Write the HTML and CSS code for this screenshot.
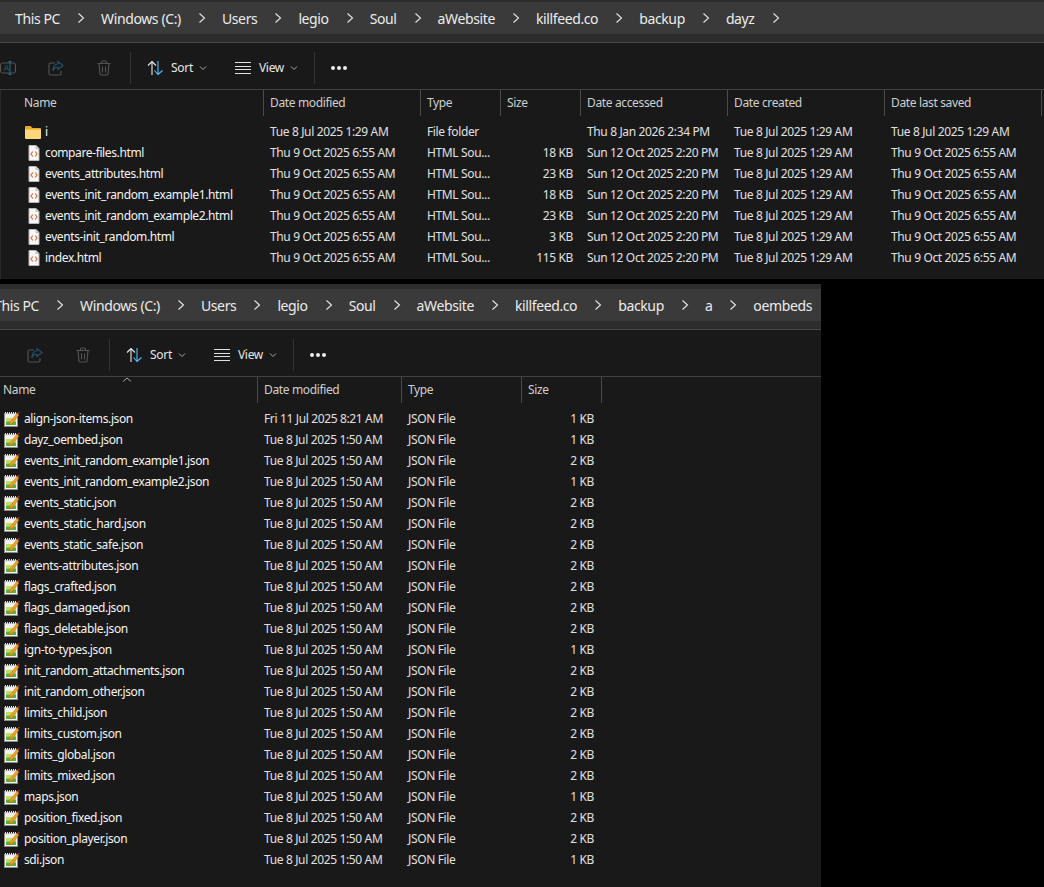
FILE: index.html
```html
<!DOCTYPE html>
<html lang="en">
<head>
<meta charset="utf-8">
<title>Explorer windows</title>
<link rel="stylesheet" href="styles.css">
</head>
<body>
<svg class="defs" width="0" height="0" aria-hidden="true">
  <symbol id="chev" viewBox="0 0 8 12"><path d="M1.5 1.5 6.5 6 1.5 10.5" fill="none" stroke="#e6e6e6" stroke-width="1.1"/></symbol>
  <symbol id="mini" viewBox="0 0 8 6"><path d="M1 1.5 4 4.5 7 1.5" fill="none" stroke="#a8a8a8" stroke-width="1"/></symbol>
  <symbol id="rename" viewBox="0 0 16 16"><rect x=".5" y="3" width="15" height="10" rx="2" fill="none" stroke="#555"/><path d="M4 11 6.500 5 9 11M5 9h3" fill="none" stroke="#1f5068"/><path d="M10 1.500v13M8.500 1.500h3M8.500 14.500h3" fill="none" stroke="#2a6a8c"/></symbol>
  <symbol id="share" viewBox="0 0 16 16"><path d="M7 3H2.500A1.500 1.500 0 0 0 1 4.500v9A1.500 1.500 0 0 0 2.500 15h9a1.500 1.500 0 0 0 1.500-1.500V11" fill="none" stroke="#555" stroke-width="1.100"/><path d="M10 1.500 15 5.500 10 9.500V7.300C7.500 7.300 5.800 8.300 4.800 11 4.800 7.500 6.800 4 10 3.800Z" fill="none" stroke="#24526c" stroke-width="1.100"/></symbol>
  <symbol id="trash" viewBox="0 0 16 16"><path d="M1.500 3.500h13M5.500 3.500V2a1 1 0 0 1 1-1h3a1 1 0 0 1 1 1v1.500M3 3.500 4 14a1.500 1.500 0 0 0 1.500 1h5A1.500 1.500 0 0 0 12 14l1-10.500M6.500 6.500v6M9.500 6.500v6" fill="none" stroke="#555" stroke-width="1.100"/></symbol>
  <symbol id="sort" viewBox="0 0 16 16"><path d="M5 15V1.500M1 5.500 5 1.500 9 5.500" fill="none" stroke="#e8e8e8" stroke-width="1.100"/><path d="M11 1v13.500M7.500 10.500 11 14.500 15.500 10.500" fill="none" stroke="#4cc2ff" stroke-width="1.100"/></symbol>
  <symbol id="view" viewBox="0 0 16 16"><path d="M0 2.500h16M0 6.500h16M0 9.500h16M0 13.500h16" fill="none" stroke="#e0e0e0" stroke-width="1"/></symbol>
  <symbol id="folder" viewBox="0 0 16 14"><path d="M0 2a1 1 0 0 1 1-1h4.500L7.500 3H15a1 1 0 0 1 1 1v1H0Z" fill="#e8a825"/><path d="M0 4.500h16V13a1 1 0 0 1-1 1H1a1 1 0 0 1-1-1Z" fill="#fcd87a"/></symbol>
  <symbol id="html" viewBox="0 0 12 16"><path d="M1 .500h7l3 3V15.500H1Z" fill="#f7f7f7" stroke="#b8b8b8"/><path d="M8 .500V3.500h3" fill="#ddd" stroke="#b8b8b8"/><path d="M4.800 6.500 3 9 4.800 11.500M7.200 6.500 9 9 7.200 11.500" fill="none" stroke="#d8703a" stroke-width="1.200"/></symbol>
  <symbol id="json" viewBox="0 0 16 16"><rect x=".5" y="2.500" width="13" height="13" fill="#f4f4f4" stroke="#8b8b8b"/><path d="M1.500 1v3M3.500 1v3M5.500 1v3M7.500 1v3M9.500 1v3M11.500 1v3" stroke="#e2e2e2"/><rect x="2" y="5" width="10" height="9" fill="#f2f2f2"/><rect x="2" y="7" width="10" height="3.500" fill="#c2dc62"/><rect x="2" y="10.500" width="10" height="3.500" fill="#5fae38"/><path d="M5 14 6 11 13 2.500 15 4 8 12.500Z" fill="#f4a21d" stroke="#a8660e" stroke-width=".5"/><path d="M13.500 1.500 15.500 .500 15.500 3Z" fill="#c0272d"/></symbol>
</svg>

<div class="stack">
<section class="win win-a">
  <nav class="crumbs">
    <span>This PC</span><svg class="chev"><use href="#chev"/></svg>
    <span>Windows (C:)</span><svg class="chev"><use href="#chev"/></svg>
    <span>Users</span><svg class="chev"><use href="#chev"/></svg>
    <span>legio</span><svg class="chev"><use href="#chev"/></svg>
    <span>Soul</span><svg class="chev"><use href="#chev"/></svg>
    <span>aWebsite</span><svg class="chev"><use href="#chev"/></svg>
    <span>killfeed.co</span><svg class="chev"><use href="#chev"/></svg>
    <span>backup</span><svg class="chev"><use href="#chev"/></svg>
    <span>dayz</span><svg class="chev"><use href="#chev"/></svg>
  </nav>
  <div class="toolbar">
    <svg class="tool"><use href="#rename"/></svg>
    <svg class="tool"><use href="#share"/></svg>
    <svg class="tool"><use href="#trash"/></svg>
    <i class="sep"></i>
    <div class="btn"><svg class="ic"><use href="#sort"/></svg><span>Sort</span><svg class="mini"><use href="#mini"/></svg></div>
    <div class="btn"><svg class="ic"><use href="#view"/></svg><span>View</span><svg class="mini"><use href="#mini"/></svg></div>
    <i class="sep"></i>
    <div class="dots"><b></b><b></b><b></b></div>
  </div>
  <div class="list">
    <div class="row head">
      <div>Name</div><div>Date modified</div><div>Type</div><div>Size</div><div>Date accessed</div><div>Date created</div><div>Date last saved</div>
    </div>
    <div class="rows">
      <div class="row"><div class="name"><svg class="fi folder"><use href="#folder"/></svg>i</div><div>Tue 8 Jul 2025 1:29 AM</div><div>File folder</div><div></div><div>Thu 8 Jan 2026 2:34 PM</div><div>Tue 8 Jul 2025 1:29 AM</div><div>Tue 8 Jul 2025 1:29 AM</div></div>
      <div class="row"><div class="name"><svg class="fi htm"><use href="#html"/></svg>compare-files.html</div><div>Thu 9 Oct 2025 6:55 AM</div><div>HTML Sou...</div><div class="num">18 KB</div><div>Sun 12 Oct 2025 2:20 PM</div><div>Tue 8 Jul 2025 1:29 AM</div><div>Thu 9 Oct 2025 6:55 AM</div></div>
      <div class="row"><div class="name"><svg class="fi htm"><use href="#html"/></svg>events_attributes.html</div><div>Thu 9 Oct 2025 6:55 AM</div><div>HTML Sou...</div><div class="num">23 KB</div><div>Sun 12 Oct 2025 2:20 PM</div><div>Tue 8 Jul 2025 1:29 AM</div><div>Thu 9 Oct 2025 6:55 AM</div></div>
      <div class="row"><div class="name"><svg class="fi htm"><use href="#html"/></svg>events_init_random_example1.html</div><div>Thu 9 Oct 2025 6:55 AM</div><div>HTML Sou...</div><div class="num">18 KB</div><div>Sun 12 Oct 2025 2:20 PM</div><div>Tue 8 Jul 2025 1:29 AM</div><div>Thu 9 Oct 2025 6:55 AM</div></div>
      <div class="row"><div class="name"><svg class="fi htm"><use href="#html"/></svg>events_init_random_example2.html</div><div>Thu 9 Oct 2025 6:55 AM</div><div>HTML Sou...</div><div class="num">23 KB</div><div>Sun 12 Oct 2025 2:20 PM</div><div>Tue 8 Jul 2025 1:29 AM</div><div>Thu 9 Oct 2025 6:55 AM</div></div>
      <div class="row"><div class="name"><svg class="fi htm"><use href="#html"/></svg>events-init_random.html</div><div>Thu 9 Oct 2025 6:55 AM</div><div>HTML Sou...</div><div class="num">3 KB</div><div>Sun 12 Oct 2025 2:20 PM</div><div>Tue 8 Jul 2025 1:29 AM</div><div>Thu 9 Oct 2025 6:55 AM</div></div>
      <div class="row"><div class="name"><svg class="fi htm"><use href="#html"/></svg>index.html</div><div>Thu 9 Oct 2025 6:55 AM</div><div>HTML Sou...</div><div class="num">115 KB</div><div>Sun 12 Oct 2025 2:20 PM</div><div>Tue 8 Jul 2025 1:29 AM</div><div>Thu 9 Oct 2025 6:55 AM</div></div>
    </div>
  </div>
</section>

<section class="win win-b">
  <nav class="crumbs">
    <span>This PC</span><svg class="chev"><use href="#chev"/></svg>
    <span>Windows (C:)</span><svg class="chev"><use href="#chev"/></svg>
    <span>Users</span><svg class="chev"><use href="#chev"/></svg>
    <span>legio</span><svg class="chev"><use href="#chev"/></svg>
    <span>Soul</span><svg class="chev"><use href="#chev"/></svg>
    <span>aWebsite</span><svg class="chev"><use href="#chev"/></svg>
    <span>killfeed.co</span><svg class="chev"><use href="#chev"/></svg>
    <span>backup</span><svg class="chev"><use href="#chev"/></svg>
    <span>a</span><svg class="chev"><use href="#chev"/></svg>
    <span>oembeds</span>
  </nav>
  <div class="toolbar">
    <svg class="tool"><use href="#share"/></svg>
    <svg class="tool"><use href="#trash"/></svg>
    <i class="sep"></i>
    <div class="btn"><svg class="ic"><use href="#sort"/></svg><span>Sort</span><svg class="mini"><use href="#mini"/></svg></div>
    <div class="btn"><svg class="ic"><use href="#view"/></svg><span>View</span><svg class="mini"><use href="#mini"/></svg></div>
    <i class="sep"></i>
    <div class="dots"><b></b><b></b><b></b></div>
  </div>
  <div class="list">
    <svg class="caret" width="10" height="5" viewBox="0 0 10 5"><path d="M1 4.500 5 1 9 4.500" fill="none" stroke="#a8a8a8"/></svg>
    <div class="row head">
      <div>Name</div><div>Date modified</div><div>Type</div><div>Size</div>
    </div>
    <div class="rows">
      <div class="row"><div class="name"><svg class="fi"><use href="#json"/></svg>align-json-items.json</div><div>Fri 11 Jul 2025 8:21 AM</div><div>JSON File</div><div class="num">1 KB</div></div>
      <div class="row"><div class="name"><svg class="fi"><use href="#json"/></svg>dayz_oembed.json</div><div>Tue 8 Jul 2025 1:50 AM</div><div>JSON File</div><div class="num">1 KB</div></div>
      <div class="row"><div class="name"><svg class="fi"><use href="#json"/></svg>events_init_random_example1.json</div><div>Tue 8 Jul 2025 1:50 AM</div><div>JSON File</div><div class="num">2 KB</div></div>
      <div class="row"><div class="name"><svg class="fi"><use href="#json"/></svg>events_init_random_example2.json</div><div>Tue 8 Jul 2025 1:50 AM</div><div>JSON File</div><div class="num">1 KB</div></div>
      <div class="row"><div class="name"><svg class="fi"><use href="#json"/></svg>events_static.json</div><div>Tue 8 Jul 2025 1:50 AM</div><div>JSON File</div><div class="num">2 KB</div></div>
      <div class="row"><div class="name"><svg class="fi"><use href="#json"/></svg>events_static_hard.json</div><div>Tue 8 Jul 2025 1:50 AM</div><div>JSON File</div><div class="num">2 KB</div></div>
      <div class="row"><div class="name"><svg class="fi"><use href="#json"/></svg>events_static_safe.json</div><div>Tue 8 Jul 2025 1:50 AM</div><div>JSON File</div><div class="num">2 KB</div></div>
      <div class="row"><div class="name"><svg class="fi"><use href="#json"/></svg>events-attributes.json</div><div>Tue 8 Jul 2025 1:50 AM</div><div>JSON File</div><div class="num">2 KB</div></div>
      <div class="row"><div class="name"><svg class="fi"><use href="#json"/></svg>flags_crafted.json</div><div>Tue 8 Jul 2025 1:50 AM</div><div>JSON File</div><div class="num">2 KB</div></div>
      <div class="row"><div class="name"><svg class="fi"><use href="#json"/></svg>flags_damaged.json</div><div>Tue 8 Jul 2025 1:50 AM</div><div>JSON File</div><div class="num">2 KB</div></div>
      <div class="row"><div class="name"><svg class="fi"><use href="#json"/></svg>flags_deletable.json</div><div>Tue 8 Jul 2025 1:50 AM</div><div>JSON File</div><div class="num">2 KB</div></div>
      <div class="row"><div class="name"><svg class="fi"><use href="#json"/></svg>ign-to-types.json</div><div>Tue 8 Jul 2025 1:50 AM</div><div>JSON File</div><div class="num">1 KB</div></div>
      <div class="row"><div class="name"><svg class="fi"><use href="#json"/></svg>init_random_attachments.json</div><div>Tue 8 Jul 2025 1:50 AM</div><div>JSON File</div><div class="num">2 KB</div></div>
      <div class="row"><div class="name"><svg class="fi"><use href="#json"/></svg>init_random_other.json</div><div>Tue 8 Jul 2025 1:50 AM</div><div>JSON File</div><div class="num">2 KB</div></div>
      <div class="row"><div class="name"><svg class="fi"><use href="#json"/></svg>limits_child.json</div><div>Tue 8 Jul 2025 1:50 AM</div><div>JSON File</div><div class="num">2 KB</div></div>
      <div class="row"><div class="name"><svg class="fi"><use href="#json"/></svg>limits_custom.json</div><div>Tue 8 Jul 2025 1:50 AM</div><div>JSON File</div><div class="num">2 KB</div></div>
      <div class="row"><div class="name"><svg class="fi"><use href="#json"/></svg>limits_global.json</div><div>Tue 8 Jul 2025 1:50 AM</div><div>JSON File</div><div class="num">2 KB</div></div>
      <div class="row"><div class="name"><svg class="fi"><use href="#json"/></svg>limits_mixed.json</div><div>Tue 8 Jul 2025 1:50 AM</div><div>JSON File</div><div class="num">2 KB</div></div>
      <div class="row"><div class="name"><svg class="fi"><use href="#json"/></svg>maps.json</div><div>Tue 8 Jul 2025 1:50 AM</div><div>JSON File</div><div class="num">1 KB</div></div>
      <div class="row"><div class="name"><svg class="fi"><use href="#json"/></svg>position_fixed.json</div><div>Tue 8 Jul 2025 1:50 AM</div><div>JSON File</div><div class="num">2 KB</div></div>
      <div class="row"><div class="name"><svg class="fi"><use href="#json"/></svg>position_player.json</div><div>Tue 8 Jul 2025 1:50 AM</div><div>JSON File</div><div class="num">2 KB</div></div>
      <div class="row"><div class="name"><svg class="fi"><use href="#json"/></svg>sdi.json</div><div>Tue 8 Jul 2025 1:50 AM</div><div>JSON File</div><div class="num">1 KB</div></div>
    </div>
  </div>
</section>
</div>
</body>
</html>
```
FILE: styles.css
```css
* { box-sizing: border-box; }
html, body { margin: 0; height: 100%; background: #000; overflow: hidden; }
body { font-family: "Noto Sans", "Open Sans", sans-serif; font-size: 12px; color: #f0f0f0; }
.defs { position: absolute; }
.stack { display: flex; flex-direction: column; gap: 5px; height: 887px; }

.win { background: #191919; overflow: hidden; flex: none; }
.win-a { width: 1044px; height: 279px; }
.win-b { width: 821px; height: 603px; }

/* address bar */
.crumbs {
  height: 43px;
  padding: 2px 0 8px 15px;
  background: linear-gradient(#3a3a3a, #3a3a3a) 0 2px / 100% 32px no-repeat #2c2c2c;
  border-bottom: 1px solid #474747;
  display: flex;
  align-items: center;
  font-size: 14px;
  letter-spacing: -.38px;
  white-space: nowrap;
  color: #ececec;
}
.win-b .crumbs {
  height: 46px;
  padding: 5px 0 8px 0;
  margin-left: -6px;
  background-position: 0 5px;
}
.chev { width: 8px; height: 12px; flex: none; margin: 0 16px 0 17px; }

/* command bar */
.toolbar { height: 47px; border-bottom: 1px solid #404040; display: flex; align-items: center; padding-top: 3px; }
.tool { width: 16px; height: 16px; flex: none; margin-right: 32px; }
.win-b .tool:first-child { margin-left: 27px; }
.sep { width: 1px; height: 32px; background: #333; flex: none; margin-left: -14px; margin-right: 16px; }
.btn { display: flex; align-items: center; flex: none; margin-right: 28px; letter-spacing: -.3px; color: #e6e6e6; }
.btn + .sep { margin-left: -12px; margin-right: 16px; }
.ic { width: 16px; height: 16px; margin-right: 8px; }
.mini { width: 8px; height: 6px; margin-left: 6px; }
.dots { display: flex; gap: 2px; }
.dots b { width: 4px; height: 4px; border-radius: 50%; background: #eee; }

/* lists */
.list { position: relative; }
.win-a .list { height: 189px; box-shadow: inset 6px 0 0 -5px #2a2a2a; }
.row { display: grid; height: 21px; align-items: center; white-space: nowrap; letter-spacing: -.36px; color: #e0e0e0; }
.win-a .row { grid-template-columns: 264px 157px 80px 80px 147px 157px 157px; }
.win-b .row { grid-template-columns: 258px 144px 120px 80px; }
.row > div { padding-left: 6px; min-width: 0; }
.row > .name { padding-left: 0; display: flex; align-items: center; color: #f4f4f4; letter-spacing: -.38px; }
.win-a .row > .name { padding-left: 24px; }
.win-b .row > .name { padding-left: 3px; }
.row > .num { padding: 0 8px 0 0; text-align: right; }
.win-b .row > .num { padding-right: 8px; }

.head { height: 26px; color: #cfcfcf; }
.head > div { height: 26px; line-height: 26px; border-right: 1px solid #4a4a4a; }
.win-a .head > div:first-child { padding-left: 24px; }
.win-b .head > div:first-child { padding-left: 3px; }
.rows { padding-top: 5px; }

.caret { position: absolute; left: 122px; top: 0; }

.fi { width: 16px; height: 16px; flex: none; margin-left: 1px; margin-right: 4px; }
.fi.folder { height: 14px; }
.fi.htm { width: 12px; margin-left: 4px; margin-right: 5px; }
```
